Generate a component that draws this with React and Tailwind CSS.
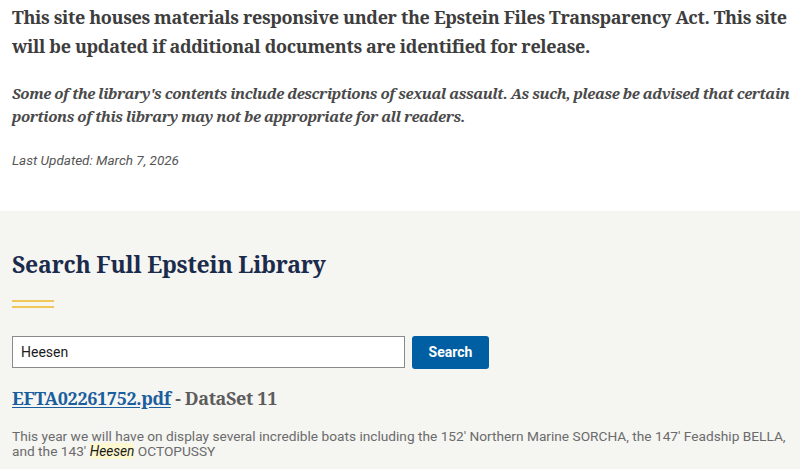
const serif = "font-['Noto_Serif',serif]";
const sans = "font-['Roboto',sans-serif]";

export default function App() {
  return (
    <div className="w-[800px] h-[469px] overflow-hidden bg-[#f5f5f2]">
      <div className="bg-white pl-3 pt-[3px] h-[211px]">
        <p className={`${serif} font-bold text-[18px] leading-[29px] tracking-[-0.35px] text-[#3d3d3d]`}>
          This site houses materials responsive under the Epstein Files Transparency Act. This site will be updated if additional documents are identified for release.
        </p>
        <p className={`${serif} mt-[21px] font-bold italic text-[15px] leading-[23px] tracking-[-0.45px] text-[#4a4a4a]`}>
          Some of the library's contents include descriptions of sexual assault. As such, please be advised that certain portions of this library may not be appropriate for all readers.
        </p>
        <p className={`${sans} mt-[22px] italic text-[13.5px] leading-[20px] text-[#555]`}>
          Last Updated: March 7, 2026
        </p>
      </div>
      <div className="px-3 pt-[37px]">
        <h2 className={`${serif} font-bold text-[23px] leading-[32px] tracking-[-0.2px] text-[#1b2b4b]`}>
          Search Full Epstein Library
        </h2>
        <div className="mt-[20px] flex flex-col gap-[4px] w-[42px]">
          <div className="h-[2px] bg-[#f3c65a]" />
          <div className="h-[2px] bg-[#f3c65a]" />
        </div>
        <div className="mt-[28px] flex items-start gap-[7px]">
          <input
            defaultValue="Heesen"
            className={`${sans} w-[393px] h-[32px] border border-[#8a8a8a] bg-white px-[8px] text-[14px] text-[#1b1b1b] outline-none`}
          />
          <button className={`${sans} w-[77px] h-[33px] rounded-[3px] bg-[#005ea2] text-white font-bold text-[14px]`}>
            Search
          </button>
        </div>
        <div className={`${serif} mt-[15px] font-bold text-[18px] leading-[28px] tracking-[-0.35px]`}>
          <a href="#" className="text-[#1a5e9e] underline underline-offset-2">EFTA02261752.pdf</a>
          <span className="text-[#5c5c5c]"> - DataSet 11</span>
        </div>
        <p className={`${sans} mt-[17px] text-[13.7px] leading-[15px] text-[#6b6b6b] w-[780px]`}>
          This year we will have on display several incredible boats including the 152' Northern Marine SORCHA, the 147' Feadship BELLA, and the 143' <em className="bg-[#fdf8d0] text-[#1b1b1b]">Heesen</em> OCTOPUSSY
        </p>
      </div>
    </div>
  );
}
